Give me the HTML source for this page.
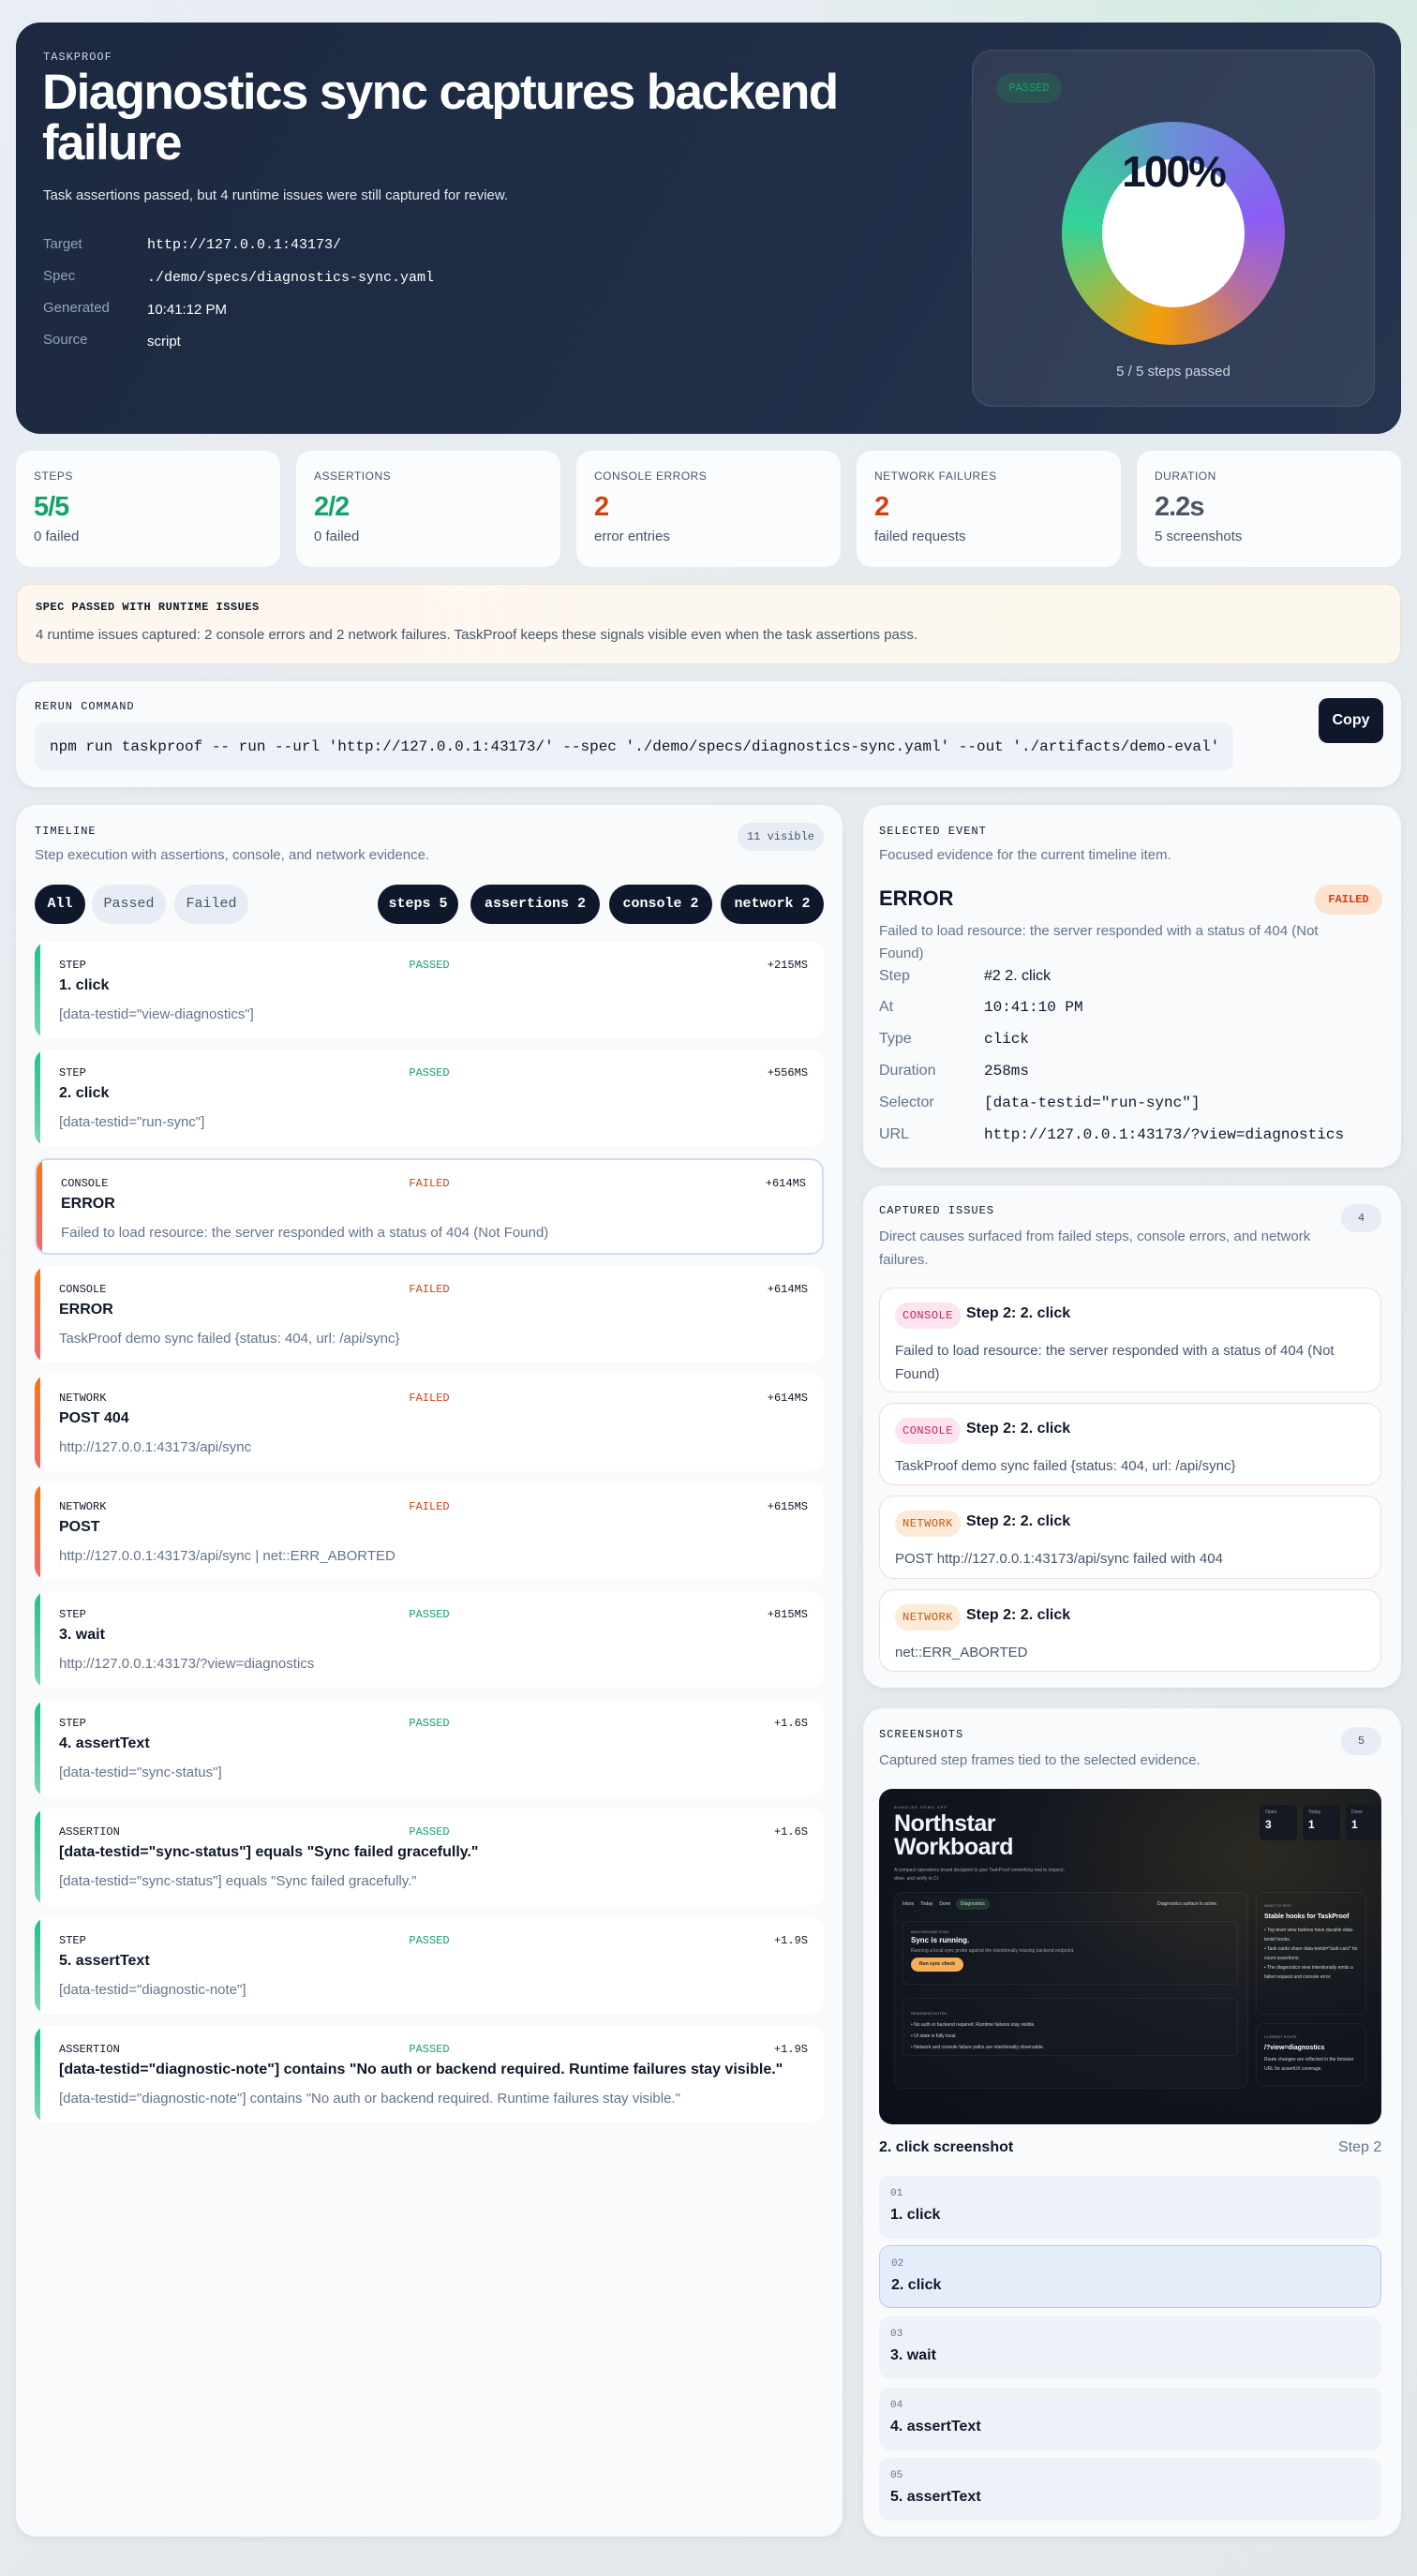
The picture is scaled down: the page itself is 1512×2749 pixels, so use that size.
<!DOCTYPE html>
<html><head><meta charset="utf-8"><style>
*{box-sizing:border-box;margin:0;padding:0}
body{width:1512px;height:2749px;position:relative;overflow:hidden;font-family:"Liberation Sans",sans-serif;color:#0f172a;background:linear-gradient(135deg,#e9edf5 0%,#e6ebef 40%,#e2e7ec 100%)}
.bgg{position:absolute;right:0;top:0;width:700px;height:300px;background:radial-gradient(ellipse at 80% 0%,rgba(200,235,215,.6),transparent 70%)}
.mono{font-family:"Liberation Mono",monospace}
.abs{position:absolute}
.panel{position:absolute;background:#f8fafc;border-radius:22px;box-shadow:0 2px 8px rgba(15,23,42,.06)}
.hero{left:17px;top:24px;width:1478px;height:439px;border-radius:26px;background:linear-gradient(120deg,#1c2940 0%,#1f2d47 50%,#26344f 100%)}
.lbl{font-family:"Liberation Mono",monospace;font-size:12px;letter-spacing:1px;color:#0f172a;text-transform:uppercase}
.muted{color:#64748b}
.stat{position:absolute;top:481px;width:282px;height:124px;background:#fbfcfd;border-radius:16px;padding:20px 19px}
.stat .l{font-size:12px;color:#475569;letter-spacing:.5px}
.stat .v{font-size:29px;font-weight:bold;margin-top:10px;letter-spacing:-1px}
.stat .s{font-size:15px;color:#475569;margin-top:6px}
.chip{position:absolute;top:944px;height:42px;border-radius:21px;font-family:"Liberation Mono",monospace;font-size:15px;line-height:42px;text-align:center}
.dk{background:#0f172a;color:#fff;font-weight:bold}
.lt{background:#e8edf5;color:#475569}
.card{position:absolute;left:37px;width:842px;height:103px;background:#fff;border-radius:14px;overflow:hidden}
.card .bar{position:absolute;left:0;top:0;bottom:0;width:6px}
.g .bar{background:linear-gradient(#22c08a,#7fd3b4)}
.r .bar{background:linear-gradient(#f97316,#ef6a6a)}
.card .k{position:absolute;left:26px;top:18px;font-family:"Liberation Mono",monospace;font-size:12px;color:#0f172a}
.card .st{position:absolute;left:0;right:0;top:18px;text-align:center;font-family:"Liberation Mono",monospace;font-size:12px}
.card .tm{position:absolute;right:17px;top:18px;font-family:"Liberation Mono",monospace;font-size:12px}
.card .t{position:absolute;left:26px;top:38px;font-size:16px;font-weight:bold;white-space:nowrap}
.card .d{position:absolute;left:26px;top:69px;font-size:15px;color:#64748b;white-space:nowrap}
.pass{color:#16a36a}.fail{color:#d4410f}
.row{position:absolute;left:938px;font-size:16px;color:#64748b}
.row b{position:absolute;left:112px;font-weight:normal;color:#0f172a;white-space:nowrap}
.iss{position:absolute;left:938px;width:536px;background:#fff;border:1px solid #f6dcd2;border-radius:16px}
.tag{position:absolute;left:16px;top:15px;height:28px;width:70px;border-radius:14px;font-family:"Liberation Mono",monospace;font-size:12px;line-height:28px;text-align:center;letter-spacing:.5px}
.tc{background:#fde4ee;color:#cc1f60}.tn{background:#fdebd8;color:#c2570c}
.iss .h{position:absolute;left:92px;top:18px;font-size:16px;font-weight:bold}
.iss .p{position:absolute;left:16px;top:54px;font-size:15px;color:#475569;line-height:25px;width:500px}
.sl{position:absolute;left:938px;width:536px;height:67px;border-radius:12px;background:#eef2f8}
.sl .n{position:absolute;left:12px;top:13px;font-family:"Liberation Mono",monospace;font-size:11px;color:#64748b}
.sl .t{position:absolute;left:12px;top:33px;font-size:16px;font-weight:bold}
.pill{position:absolute;height:30px;border-radius:15px;background:#e8edf5;font-family:"Liberation Mono",monospace;font-size:12px;line-height:30px;text-align:center;color:#475569}
</style></head><body>
<div class="bgg"></div>
<div class="hero abs">
  <div class="abs mono" style="left:29px;top:30px;font-size:12px;color:#cbd5e1;letter-spacing:1px">TASKPROOF</div>
  <div class="abs" style="left:28px;top:48px;width:960px;font-size:53px;font-weight:bold;color:#fff;line-height:54px;letter-spacing:-1.6px">Diagnostics sync captures backend failure</div>
  <div class="abs" style="left:29px;top:176px;font-size:15px;color:#e2e8f0">Task assertions passed, but 4 runtime issues were still captured for review.</div>
  <div class="abs" style="left:29px;top:220px;font-size:15px;color:#94a3b8;line-height:34px">Target<br>Spec<br>Generated<br>Source</div>
  <div class="abs" style="left:140px;top:220px;font-size:15px;color:#fff;line-height:34px"><span class="mono">http://127.0.0.1:43173/</span><br><span class="mono">./demo/specs/diagnostics-sync.yaml</span><br>10:41:12 PM<br>script</div>
  <div class="abs" style="left:1020px;top:29px;width:430px;height:381px;border-radius:22px;background:rgba(255,255,255,.07);border:1px solid rgba(255,255,255,.1)">
    <div class="abs mono" style="left:25px;top:24px;width:70px;height:32px;border-radius:16px;background:#2c5251;color:#16a36a;font-size:12px;line-height:32px;text-align:center">PASSED</div>
    <div class="abs" style="left:95px;top:76px;width:238px;height:238px;border-radius:50%;background:conic-gradient(#6b8fd6 0deg,#8b5cf6 80deg,#b46fa0 130deg,#e3902a 175deg,#f59e0b 190deg,#84c15a 240deg,#34d399 275deg,#45b8aa 320deg,#6b8fd6 360deg)"></div>
    <div class="abs" style="left:138px;top:116px;width:152px;height:158px;border-radius:50%;background:#fff"></div>
    <div class="abs" style="left:0;width:428px;top:102px;text-align:center;font-size:46px;font-weight:bold;color:#0f172a;letter-spacing:-2px">100%</div>
    <div class="abs" style="left:0;width:428px;top:334px;text-align:center;font-size:15px;color:#cbd5e1">5 / 5 steps passed</div>
  </div>
</div>

<div class="stat" style="left:17px"><div class="l">STEPS</div><div class="v pass">5/5</div><div class="s">0 failed</div></div>
<div class="stat" style="left:316px"><div class="l">ASSERTIONS</div><div class="v pass">2/2</div><div class="s">0 failed</div></div>
<div class="stat" style="left:615px"><div class="l">CONSOLE ERRORS</div><div class="v fail">2</div><div class="s">error entries</div></div>
<div class="stat" style="left:914px"><div class="l">NETWORK FAILURES</div><div class="v fail">2</div><div class="s">failed requests</div></div>
<div class="stat" style="left:1213px"><div class="l">DURATION</div><div class="v" style="color:#4b5563">2.2s</div><div class="s">5 screenshots</div></div>

<div class="abs" style="left:17px;top:623px;width:1478px;height:86px;border-radius:16px;background:linear-gradient(90deg,#fdf7f0,#fdf8ee);border:1px solid #f3dcc6">
  <div class="abs mono" style="left:20px;top:17px;font-size:12px;font-weight:bold;letter-spacing:.5px">SPEC PASSED WITH RUNTIME ISSUES</div>
  <div class="abs" style="left:20px;top:45px;font-size:15px;color:#475569">4 runtime issues captured: 2 console errors and 2 network failures. TaskProof keeps these signals visible even when the task assertions pass.</div>
</div>

<div class="panel" style="left:17px;top:727px;width:1478px;height:113px">
  <div class="lbl abs" style="left:20px;top:20px">RERUN COMMAND</div>
  <div class="abs mono" style="left:20px;top:44px;width:1279px;height:52px;border-radius:12px;background:#edf1f8;padding:0 16px;line-height:52px;font-size:16px;white-space:nowrap">npm run taskproof -- run --url 'http://127.0.0.1:43173/' --spec './demo/specs/diagnostics-sync.yaml' --out './artifacts/demo-eval'</div>
  <div class="abs" style="left:1390px;top:18px;width:69px;height:48px;border-radius:10px;background:#0f172a;color:#fff;font-size:16px;font-weight:bold;line-height:48px;text-align:center">Copy</div>
</div>

<div class="panel" style="left:17px;top:859px;width:882px;height:1848px"></div>
<div class="lbl abs" style="left:37px;top:880px">TIMELINE</div>
<div class="abs muted" style="left:37px;top:904px;font-size:15px">Step execution with assertions, console, and network evidence.</div>
<div class="pill" style="left:787px;top:878px;width:92px">11 visible</div>
<div class="chip dk" style="left:37px;width:54px">All</div>
<div class="chip lt" style="left:98px;width:79px">Passed</div>
<div class="chip lt" style="left:186px;width:79px">Failed</div>
<div class="chip dk" style="left:403px;width:86px">steps 5</div>
<div class="chip dk" style="left:502px;width:138px">assertions 2</div>
<div class="chip dk" style="left:650px;width:110px">console 2</div>
<div class="chip dk" style="left:769px;width:110px">network 2</div>

<div class="card g" style="top:1005px"><div class="bar"></div><div class="k">STEP</div><div class="st pass">PASSED</div><div class="tm">+215MS</div><div class="t">1. click</div><div class="d">[data-testid="view-diagnostics"]</div></div>
<div class="card g" style="top:1120px"><div class="bar"></div><div class="k">STEP</div><div class="st pass">PASSED</div><div class="tm">+556MS</div><div class="t">2. click</div><div class="d">[data-testid="run-sync"]</div></div>
<div class="card r" style="top:1236px;border:2px solid #cfdcf5"><div class="bar"></div><div class="k">CONSOLE</div><div class="st fail">FAILED</div><div class="tm">+614MS</div><div class="t">ERROR</div><div class="d">Failed to load resource: the server responded with a status of 404 (Not Found)</div></div>
<div class="card r" style="top:1351px"><div class="bar"></div><div class="k">CONSOLE</div><div class="st fail">FAILED</div><div class="tm">+614MS</div><div class="t">ERROR</div><div class="d">TaskProof demo sync failed {status: 404, url: /api/sync}</div></div>
<div class="card r" style="top:1467px"><div class="bar"></div><div class="k">NETWORK</div><div class="st fail">FAILED</div><div class="tm">+614MS</div><div class="t">POST 404</div><div class="d">http://127.0.0.1:43173/api/sync</div></div>
<div class="card r" style="top:1583px"><div class="bar"></div><div class="k">NETWORK</div><div class="st fail">FAILED</div><div class="tm">+615MS</div><div class="t">POST</div><div class="d">http://127.0.0.1:43173/api/sync | net::ERR_ABORTED</div></div>
<div class="card g" style="top:1698px"><div class="bar"></div><div class="k">STEP</div><div class="st pass">PASSED</div><div class="tm">+815MS</div><div class="t">3. wait</div><div class="d">http://127.0.0.1:43173/?view=diagnostics</div></div>
<div class="card g" style="top:1814px"><div class="bar"></div><div class="k">STEP</div><div class="st pass">PASSED</div><div class="tm">+1.6S</div><div class="t">4. assertText</div><div class="d">[data-testid="sync-status"]</div></div>
<div class="card g" style="top:1930px"><div class="bar"></div><div class="k">ASSERTION</div><div class="st pass">PASSED</div><div class="tm">+1.6S</div><div class="t">[data-testid="sync-status"] equals "Sync failed gracefully."</div><div class="d">[data-testid="sync-status"] equals "Sync failed gracefully."</div></div>
<div class="card g" style="top:2046px"><div class="bar"></div><div class="k">STEP</div><div class="st pass">PASSED</div><div class="tm">+1.9S</div><div class="t">5. assertText</div><div class="d">[data-testid="diagnostic-note"]</div></div>
<div class="card g" style="top:2162px"><div class="bar"></div><div class="k">ASSERTION</div><div class="st pass">PASSED</div><div class="tm">+1.9S</div><div class="t">[data-testid="diagnostic-note"] contains "No auth or backend required. Runtime failures stay visible."</div><div class="d">[data-testid="diagnostic-note"] contains "No auth or backend required. Runtime failures stay visible."</div></div>

<div class="panel" style="left:921px;top:859px;width:574px;height:387px"></div>
<div class="lbl abs" style="left:938px;top:880px">SELECTED EVENT</div>
<div class="abs muted" style="left:938px;top:904px;font-size:15px">Focused evidence for the current timeline item.</div>
<div class="abs" style="left:938px;top:946px;font-size:22px;font-weight:bold">ERROR</div>
<div class="abs mono" style="left:1403px;top:944px;width:72px;height:32px;border-radius:16px;background:#fde2d0;color:#d4410f;font-size:12px;font-weight:bold;line-height:32px;text-align:center">FAILED</div>
<div class="abs muted" style="left:938px;top:982px;width:490px;font-size:15px;line-height:24px">Failed to load resource: the server responded with a status of 404 (Not Found)</div>
<div class="row" style="top:1033px">Step<b>#2 2. click</b></div>
<div class="row" style="top:1066px">At<b class="mono">10:41:10 PM</b></div>
<div class="row" style="top:1100px">Type<b class="mono">click</b></div>
<div class="row" style="top:1134px">Duration<b class="mono">258ms</b></div>
<div class="row" style="top:1168px">Selector<b class="mono">[data-testid="run-sync"]</b></div>
<div class="row" style="top:1202px">URL<b class="mono">http://127.0.0.1:43173/?view=diagnostics</b></div>

<div class="panel" style="left:921px;top:1265px;width:574px;height:536px"></div>
<div class="lbl abs" style="left:938px;top:1285px">CAPTURED ISSUES</div>
<div class="pill" style="left:1431px;top:1285px;width:43px">4</div>
<div class="abs muted" style="left:938px;top:1307px;width:470px;font-size:15px;line-height:25px">Direct causes surfaced from failed steps, console errors, and network failures.</div>
<div class="iss" style="top:1374px;height:112px"><div class="tag tc">CONSOLE</div><div class="h">Step 2: 2. click</div><div class="p">Failed to load resource: the server responded with a status of 404 (Not Found)</div></div>
<div class="iss" style="top:1497px;height:88px"><div class="tag tc">CONSOLE</div><div class="h">Step 2: 2. click</div><div class="p">TaskProof demo sync failed {status: 404, url: /api/sync}</div></div>
<div class="iss" style="top:1596px;height:89px"><div class="tag tn">NETWORK</div><div class="h">Step 2: 2. click</div><div class="p">POST http://127.0.0.1:43173/api/sync failed with 404</div></div>
<div class="iss" style="top:1696px;height:88px"><div class="tag tn">NETWORK</div><div class="h">Step 2: 2. click</div><div class="p">net::ERR_ABORTED</div></div>

<div class="panel" style="left:921px;top:1823px;width:574px;height:884px"></div>
<div class="lbl abs" style="left:938px;top:1844px">SCREENSHOTS</div>
<div class="pill" style="left:1431px;top:1843px;width:43px">5</div>
<div class="abs muted" style="left:938px;top:1870px;font-size:15px">Captured step frames tied to the selected evidence.</div>
<div class="abs" style="left:938px;top:1909px;width:536px;height:358px;border-radius:14px;overflow:hidden;background:radial-gradient(ellipse at 75% 20%,#2c2a22 0%,#12161f 45%,#0b0f17 100%);color:#e2e8f0">
  <div class="abs" style="left:16px;top:17px;font-size:4px;color:#94a3b8;letter-spacing:1px">BUNDLED DEMO APP</div>
  <div class="abs" style="left:16px;top:25px;font-size:25px;font-weight:bold;line-height:25px;color:#f1f5f9;letter-spacing:-.5px">Northstar<br>Workboard</div>
  <div class="abs" style="left:16px;top:83px;font-size:5px;line-height:9px;color:#94a3b8;width:190px">A compact operations board designed to give TaskProof something real to inspect, drive, and verify in CI.</div>
  <div class="abs" style="left:406px;top:17px;width:40px;height:38px;border-radius:5px;background:#151a22;font-size:5px;padding:5px 6px;color:#94a3b8">Open<div style="font-size:12px;font-weight:bold;color:#fff;margin-top:3px">3</div></div>
  <div class="abs" style="left:452px;top:17px;width:40px;height:38px;border-radius:5px;background:#151a22;font-size:5px;padding:5px 6px;color:#94a3b8">Today<div style="font-size:12px;font-weight:bold;color:#fff;margin-top:3px">1</div></div>
  <div class="abs" style="left:498px;top:17px;width:40px;height:38px;border-radius:5px;background:#151a22;font-size:5px;padding:5px 6px;color:#94a3b8">Done<div style="font-size:12px;font-weight:bold;color:#fff;margin-top:3px">1</div></div>
  <div class="abs" style="left:16px;top:110px;width:378px;height:210px;border-radius:8px;background:rgba(255,255,255,.02);border:1px solid rgba(255,255,255,.05)">
    <div class="abs" style="left:8px;top:9px;font-size:5px;color:#cbd5e1;white-space:nowrap">Inbox &nbsp;&nbsp;&nbsp; Today &nbsp;&nbsp;&nbsp; Done &nbsp;&nbsp; <span style="background:#1e3a30;padding:3px 5px;border-radius:6px">Diagnostics</span></div>
    <div class="abs" style="left:280px;top:9px;font-size:5px;color:#cbd5e1">Diagnostics surface is active.</div>
    <div class="abs" style="left:8px;top:30px;width:358px;height:68px;border-radius:6px;border:1px solid rgba(255,255,255,.06)">
      <div class="abs" style="left:8px;top:8px;font-size:4px;color:#94a3b8">BACKGROUND SYNC</div>
      <div class="abs" style="left:8px;top:15px;font-size:8px;font-weight:bold;color:#fff">Sync is running.</div>
      <div class="abs" style="left:8px;top:28px;font-size:5px;color:#94a3b8">Running a local sync probe against the intentionally missing backend endpoint.</div>
      <div class="abs" style="left:8px;top:38px;width:56px;height:15px;border-radius:8px;background:#f6ae5a;font-size:5px;font-weight:bold;color:#1c1917;line-height:15px;text-align:center">Run sync check</div>
    </div>
    <div class="abs" style="left:8px;top:112px;width:358px;height:62px;border-radius:6px;border:1px solid rgba(255,255,255,.06);font-size:5px;color:#cbd5e1;padding:10px 8px;line-height:12px">
      <div style="font-size:4px;color:#94a3b8">READINESS NOTES</div>• No auth or backend required. Runtime failures stay visible.<br>• UI state is fully local.<br>• Network and console failure paths are intentionally observable.</div>
  </div>
  <div class="abs" style="left:402px;top:110px;width:118px;height:131px;border-radius:8px;border:1px solid rgba(255,255,255,.06);padding:9px 8px;font-size:5px;line-height:10px;color:#cbd5e1"><div style="font-size:4px;color:#94a3b8">WHAT TO TEST</div><div style="font-size:7px;font-weight:bold;color:#fff;margin:2px 0 4px">Stable hooks for TaskProof</div>• Top-level view buttons have durable data-testid hooks.<br>• Task cards share data-testid="task-card" for count assertions.<br>• The diagnostics view intentionally emits a failed request and console error.</div>
  <div class="abs" style="left:402px;top:250px;width:118px;height:67px;border-radius:8px;border:1px solid rgba(255,255,255,.06);padding:9px 8px;font-size:5px;line-height:10px;color:#cbd5e1"><div style="font-size:4px;color:#94a3b8">CURRENT ROUTE</div><div style="font-size:7px;font-weight:bold;color:#fff;margin:2px 0 2px">/?view=diagnostics</div>Route changes are reflected in the browser URL for assertUrl coverage.</div>
</div>
<div class="abs" style="left:938px;top:2283px;font-size:16px;font-weight:bold">2. click screenshot</div>
<div class="abs muted" style="left:1428px;top:2283px;font-size:16px">Step 2</div>
<div class="sl" style="top:2322px"><div class="n">01</div><div class="t">1. click</div></div>
<div class="sl" style="top:2396px;background:#e6edfa;border:1px solid #b9cdf0"><div class="n">02</div><div class="t">2. click</div></div>
<div class="sl" style="top:2472px"><div class="n">03</div><div class="t">3. wait</div></div>
<div class="sl" style="top:2548px"><div class="n">04</div><div class="t">4. assertText</div></div>
<div class="sl" style="top:2623px"><div class="n">05</div><div class="t">5. assertText</div></div>
</body></html>
